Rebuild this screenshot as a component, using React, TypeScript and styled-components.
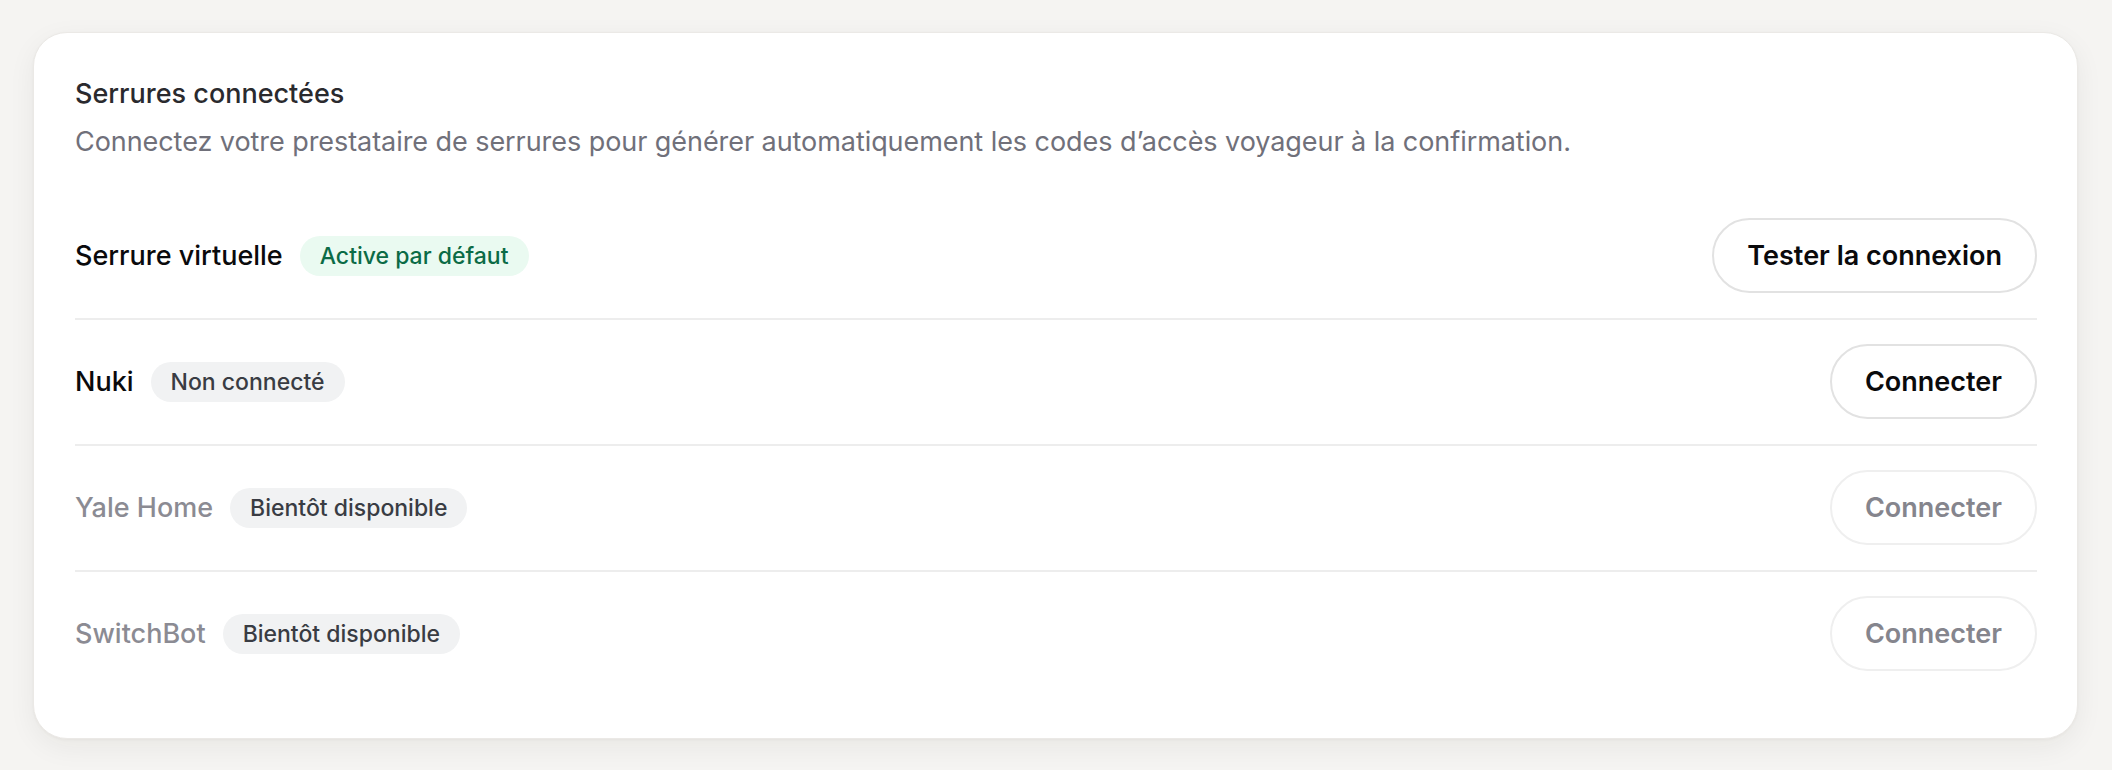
import styled, { createGlobalStyle } from 'styled-components';

const GlobalStyle = createGlobalStyle`
  html, body {
    margin: 0;
    padding: 0;
    background: #f5f4f2;
    font-family: Inter, "Noto Sans", "Liberation Sans", sans-serif;
    -webkit-font-smoothing: antialiased;
  }
`;

type Status = 'active' | 'idle' | 'soon';

interface LockProvider {
  id: string;
  name: string;
  badge: string;
  status: Status;
  action: string;
}

const providers: LockProvider[] = [
  { id: 'virtual', name: 'Serrure virtuelle', badge: 'Active par défaut', status: 'active', action: 'Tester la connexion' },
  { id: 'nuki', name: 'Nuki', badge: 'Non connecté', status: 'idle', action: 'Connecter' },
  { id: 'yale', name: 'Yale Home', badge: 'Bientôt disponible', status: 'soon', action: 'Connecter' },
  { id: 'switchbot', name: 'SwitchBot', badge: 'Bientôt disponible', status: 'soon', action: 'Connecter' },
];

const App = () => {
  return (
    <Page>
      <GlobalStyle />
      <Card>
        <Header>
          <Title>Serrures connectées</Title>
          <Description>
            Connectez votre prestataire de serrures pour générer automatiquement les codes d’accès
            voyageur à la confirmation.
          </Description>
        </Header>
        <List>
          {providers.map((p) => (
            <Row key={p.id}>
              <Info>
                <Name $disabled={p.status === 'soon'}>{p.name}</Name>
                <Badge $status={p.status}>{p.badge}</Badge>
              </Info>
              <ActionButton type="button" disabled={p.status === 'soon'}>
                {p.action}
              </ActionButton>
            </Row>
          ))}
        </List>
      </Card>
    </Page>
  );
};

const Page = styled.div`
  min-height: 770px;
  box-sizing: border-box;
  padding: 32px 34px 32px 33px;
`;

const Card = styled.section`
  box-sizing: border-box;
  background: #ffffff;
  border: 1px solid #ebe9e6;
  border-radius: 34px;
  padding: 42px 40px 42px 41px;
  box-shadow: 0 8px 28px rgba(40, 30, 20, 0.06), 0 1px 3px rgba(40, 30, 20, 0.04);
`;

const Header = styled.div`
  display: flex;
  flex-direction: column;
  gap: 10px;
  margin-bottom: 33px;
`;

const Title = styled.h2`
  margin: 0;
  font-size: 27px;
  line-height: 38px;
  font-weight: 500;
  color: #2a2a2e;
`;

const Description = styled.p`
  margin: 0;
  font-size: 27px;
  line-height: 38px;
  font-weight: 400;
  letter-spacing: -0.06px;
  color: #70707a;
`;

const List = styled.div`
  display: flex;
  flex-direction: column;
`;

const Row = styled.div`
  display: flex;
  align-items: center;
  justify-content: space-between;
  padding: 24px 0 25px;
  border-bottom: 2px solid #ededed;

  &:last-of-type {
    border-bottom: none;
  }
`;

const Info = styled.div`
  display: flex;
  align-items: center;
  gap: 17px;
`;

const Name = styled.span<{ $disabled: boolean }>`
  font-size: 27px;
  font-weight: 500;
  color: ${(props) => (props.$disabled ? '#8b8b93' : '#0a0a0c')};
`;

const Badge = styled.span<{ $status: Status }>`
  display: inline-flex;
  align-items: center;
  height: 40px;
  padding: 0 20px;
  border-radius: 20px;
  font-size: 23px;
  font-weight: 500;
  background: ${(props) => (props.$status === 'active' ? '#eafaf1' : '#f1f2f3')};
  color: ${(props) => (props.$status === 'active' ? '#0b6b46' : '#393c43')};
`;

const ActionButton = styled.button`
  box-sizing: border-box;
  height: 75px;
  padding: 0 33px;
  border-radius: 38px;
  border: 2px solid #e2e2e2;
  background: #ffffff;
  font-family: inherit;
  font-size: 27px;
  font-weight: 600;
  color: #0a0a0c;
  cursor: pointer;

  &:disabled {
    border-color: #efefef;
    color: #85858d;
    cursor: default;
  }
`;

export default App;
